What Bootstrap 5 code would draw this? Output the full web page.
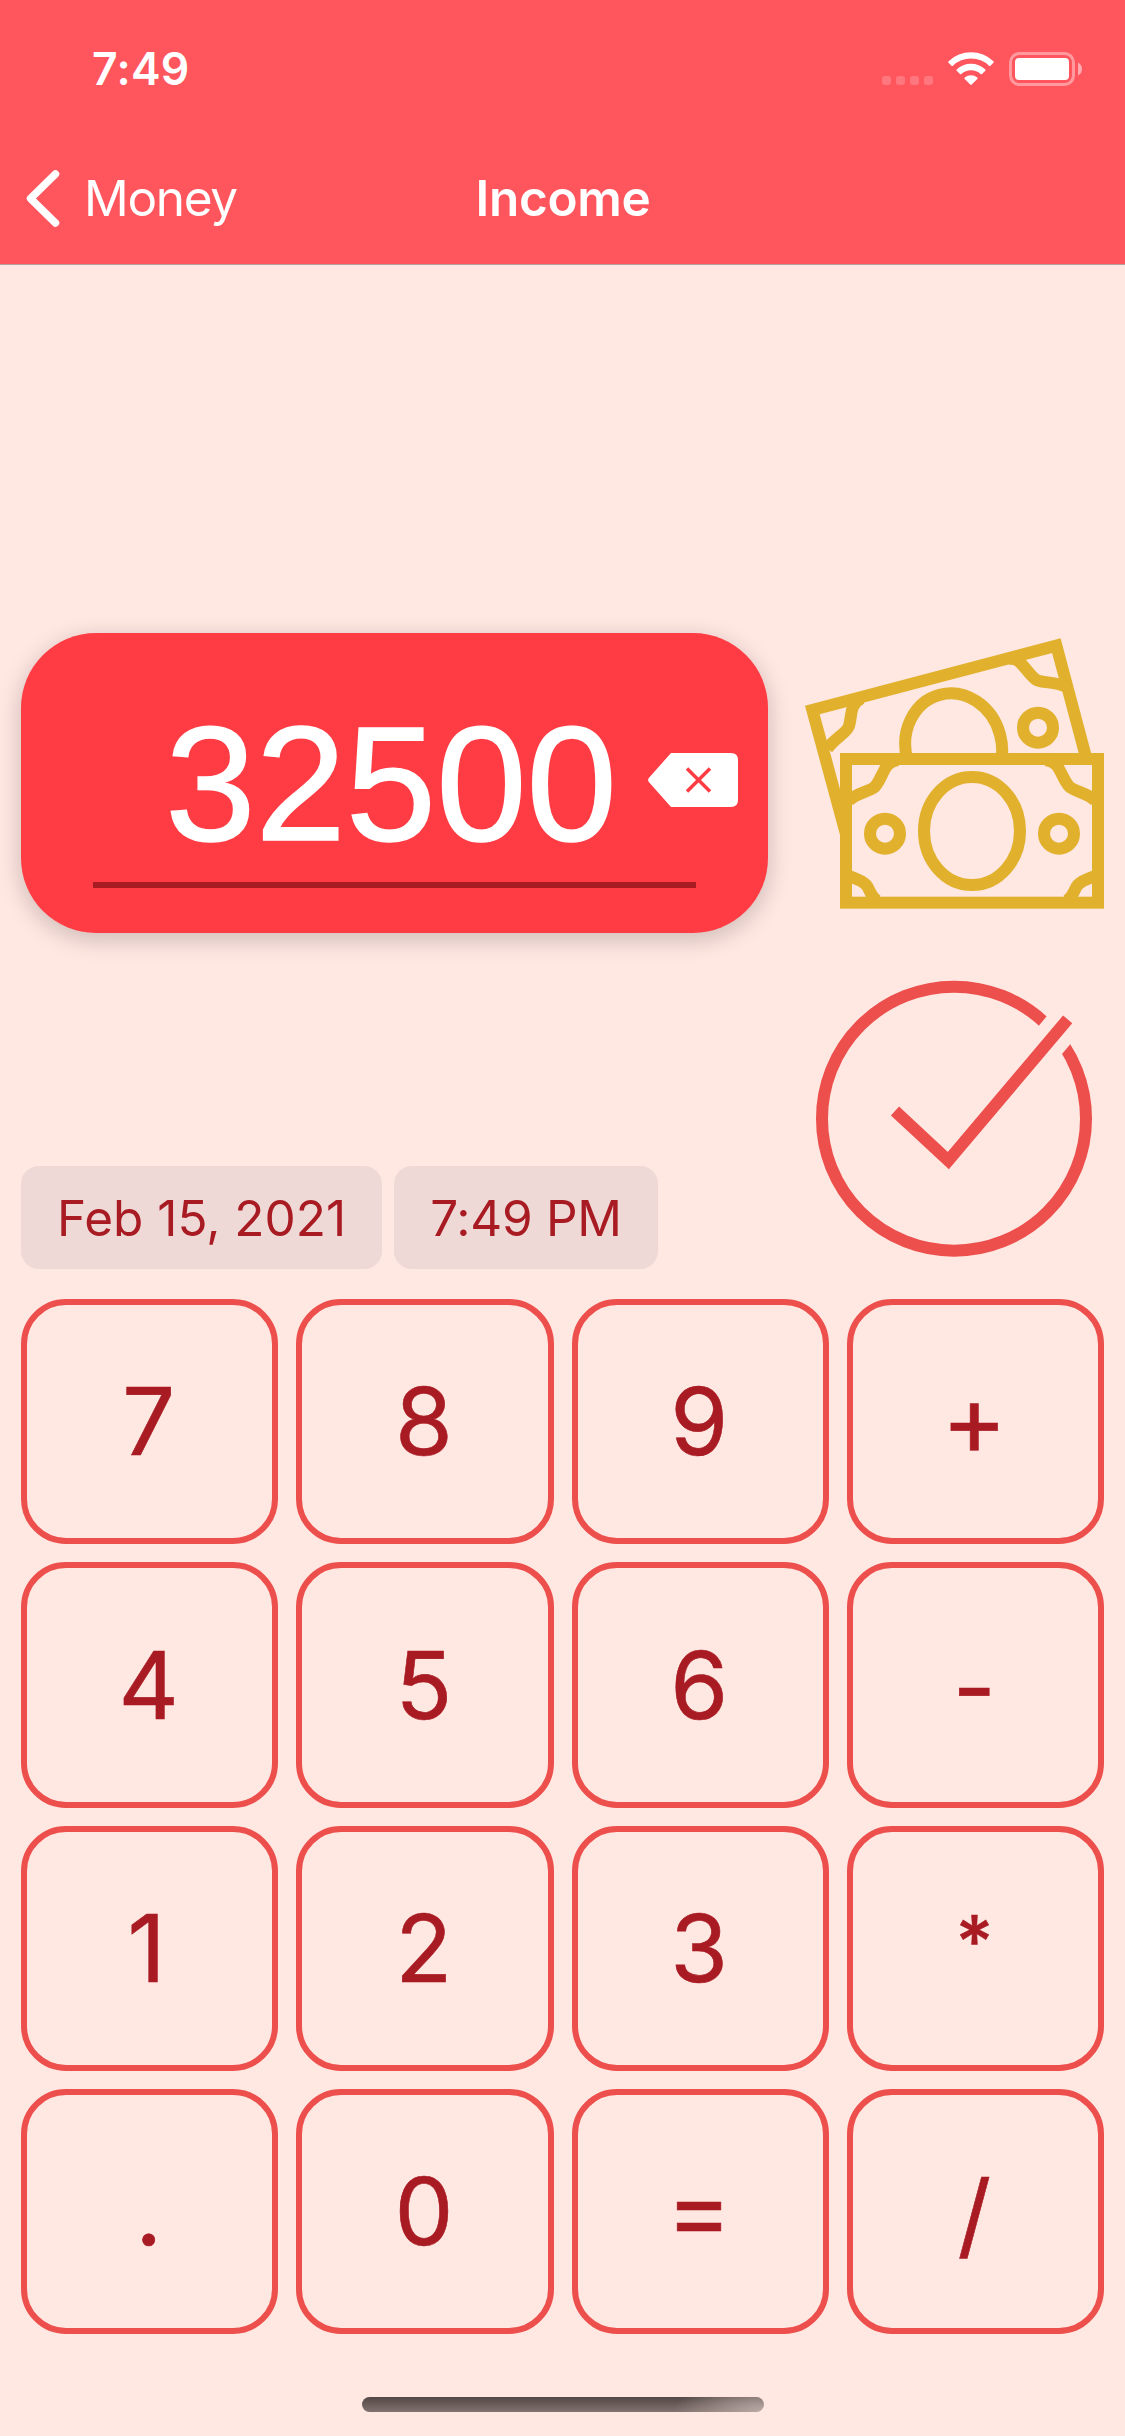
<!DOCTYPE html>
<html lang="en">
<head>
<meta charset="utf-8">
<meta name="viewport" content="width=device-width, initial-scale=1">
<title>Income</title>
<link href="https://cdn.jsdelivr.net/npm/bootstrap@5.3.0/dist/css/bootstrap.min.css" rel="stylesheet">
<style>
body{background:#ffe7e2;font-family:Inter,"Liberation Sans",sans-serif;color:#a91b23;min-height:2436px;overflow:hidden}
svg{display:block;flex-shrink:0}
.app-top{background:#ff565e;height:265px;border-bottom:1px solid #b3a29f;color:#fff}
.status-row{height:132px;padding:6px 42px 0 92px}
.clock{font-size:44.5px;font-weight:600;line-height:1;letter-spacing:.3px}
.nav-row{height:132px;padding:1px 25px 0;font-size:49.5px;line-height:1}
.nav-side{flex:1 1 0}
.nav-side a{color:#fff;letter-spacing:-1.3px}
.back-label{margin-left:22px}
.nav-title{letter-spacing:-.3px;padding-left:1px}
.page-pad{padding:0 21px}
.left-col{width:747px;padding-top:368px}
.amount-card{height:300px;border-radius:75px;background:#ff3c44;padding:70px 72px 0;box-shadow:0 6px 24px rgba(0,0,0,.2)}
.amount{font-family:"Liberation Sans",Arial,sans-serif;font-size:162.5px;line-height:162px;color:#fff;padding:0 79px 17px 0;border-bottom:6px solid #a91b23;-webkit-text-stroke:1.5px #fff}
.erase{right:30px;top:120px}
.pickers{margin-top:233px;gap:12px}
.picker{height:103px;border-radius:18px;background:#eed9d6;font-size:49.5px;line-height:1;padding-top:2px}
.picker-date{width:361px}
.picker-time{width:264px;letter-spacing:-.3px}
.right-col{padding-top:355px}
.keypad{display:grid;grid-template-columns:repeat(4,1fr);grid-auto-rows:1fr;gap:18px;height:1035px;margin-top:30px}
.key{border:6px solid #ec4f4c;border-radius:45px;font-size:93.5px;line-height:1;color:#a91b23;padding:1px 2px 0 0;-webkit-text-stroke:.6px #a91b23}
.key-one{padding-right:6px}
.key-minus{padding-top:5px}
.key-plus,.key-equals{font-size:99px;padding-bottom:5px}
.key-times{font-size:72px;font-weight:500;padding-bottom:16px}
.key-divide{padding-top:7px}
.home-bar{width:402px;height:15px;border-radius:8px;margin:63px auto 0;background:radial-gradient(90px 34px at 100% 100%,rgba(190,172,168,.95),rgba(160,145,141,0)),linear-gradient(#524845,#82726f)}
</style>
</head>
<body>
<header class="app-top">
  <div class="status-row d-flex align-items-center justify-content-between">
    <span class="clock">7:49</span>
    <svg width="202" height="34" viewBox="881 52 202 34" fill="#fff">
      <g fill-opacity=".2"><rect x="882" y="76" width="9" height="9" rx="3"/><rect x="896" y="76" width="9" height="9" rx="3"/><rect x="910" y="76" width="9" height="9" rx="3"/><rect x="924" y="76" width="9" height="9" rx="3"/></g>
      <path d="M948.6 61.2A32.5 32.5 0 0 1 993.4 61.2Q994.2 62 993.4 62.8L990.5 65.7Q989.7 66.4 989 65.7A26 26 0 0 0 953 65.7Q952.3 66.4 951.5 65.7L948.6 62.8Q947.8 62 948.6 61.2Z"/>
      <path d="M956.7 69.4A21 21 0 0 1 985.3 69.4Q986 70.1 985.3 70.8L982 74Q981.3 74.6 980.6 74A14.3 14.3 0 0 0 961.4 74Q960.7 74.6 960 74L956.7 70.8Q956 70.1 956.7 69.4Z"/>
      <path d="M964.7 77.6A9.8 9.8 0 0 1 977.3 77.6Q978 78.3 977.3 79L971.7 84.6Q971 85.2 970.3 84.6L964.7 79Q964 78.3 964.7 77.6Z"/>
      <rect x="1010.5" y="53.5" width="63" height="31" rx="9" fill="none" stroke="#fff" stroke-opacity=".4" stroke-width="3"/>
      <rect x="1015" y="58" width="54" height="22" rx="4"/>
      <path d="M1078 62.5Q1082 64.5 1082 69T1078 75.5Z" fill-opacity=".5"/>
    </svg>
  </div>
  <nav class="nav-row d-flex align-items-center">
    <div class="nav-side"><a href="#" class="d-flex align-items-center text-decoration-none">
      <svg width="37" height="60" viewBox="25.5 168.500 37 60" fill="none" stroke="#fff" stroke-width="7.500" stroke-linecap="round" stroke-linejoin="round"><path d="M56 173.500L31 198L56 222.500"/></svg>
      <span class="back-label">Money</span></a></div>
    <span class="nav-title fw-semibold">Income</span>
    <div class="nav-side"></div>
  </nav>
</header>

<main class="page-pad">
  <div class="d-flex justify-content-between">
    <section class="left-col">
      <div class="amount-card position-relative">
        <div class="amount text-end">32500</div>
        <svg class="erase position-absolute" width="91" height="54" viewBox="0 0 91 54"><path d="M24 0H84Q91 0 91 7V47Q91 54 84 54H24L1.800 29Q.4 27 1.800 25Z" fill="#fff"/><path d="M40 15.500L63 38.500M63 15.500L40 38.500" stroke="#ff3c44" stroke-width="3.500"/></svg>
      </div>
      <div class="pickers d-flex">
        <div class="picker picker-date d-flex align-items-center justify-content-center">Feb 15, 2021</div>
        <div class="picker picker-time d-flex align-items-center justify-content-center">7:49 PM</div>
      </div>
    </section>
    <section class="right-col d-flex flex-column">
      <svg width="314" height="310" viewBox="0 0 942 930" fill="none" stroke="#e1b12d" stroke-width="36">
        <defs><clipPath id="behind"><path d="M0 0H942V410H160V700H0Z"/></clipPath></defs>
        <g clip-path="url(#behind)">
          <path d="M170 650L67 270L799 77L889 415"/>
          <ellipse cx="491" cy="381" rx="144" ry="162" transform="rotate(-15 491 381)"/>
          <circle cx="744" cy="323" r="45"/>
          <path d="M215 234C178 252 186 290 177 318C168 342 138 350 112 386"/>
          <path d="M652 118C690 104 708 158 738 179C758 190 798 184 832 202"/>
        </g>
        <rect x="168" y="417" width="756" height="431"/>
        <ellipse cx="546" cy="633" rx="144" ry="162"/>
        <circle cx="285" cy="641" r="45"/><circle cx="807" cy="641" r="45"/>
        <path d="M325 420C280 424 282 468 255 500C238 515 200 518 176 542M766 420C812 424 810 468 838 500C854 515 892 518 916 542M172 766C196 776 212 778 228 794C240 808 242 830 262 842M920 766C896 776 880 778 864 794C852 808 850 830 830 842"/>
      </svg>
      <svg class="mt-auto" width="314" height="309" viewBox="0 0 942 927" fill="none" stroke="#ec4f4c" stroke-width="36">
        <defs><mask id="gap" maskUnits="userSpaceOnUse" x="0" y="0" width="942" height="927"><path d="M0 0H942V927H0Z" fill="#fff" stroke="none"/><path d="M640 408L900 98" stroke="#000" stroke-width="108"/></mask></defs>
        <circle cx="492" cy="476" r="396" mask="url(#gap)"/>
        <path d="M315 453L475 602L833 178"/>
      </svg>
    </section>
  </div>

  <div class="keypad">
    <button class="btn key">7</button><button class="btn key">8</button><button class="btn key">9</button><button class="btn key key-plus">+</button>
    <button class="btn key">4</button><button class="btn key">5</button><button class="btn key">6</button><button class="btn key key-minus">-</button>
    <button class="btn key key-one">1</button><button class="btn key">2</button><button class="btn key">3</button><button class="btn key key-times">*</button>
    <button class="btn key">.</button><button class="btn key">0</button><button class="btn key key-equals">=</button><button class="btn key key-divide">/</button>
  </div>
  <div class="home-bar"></div>
</main>
<script src="https://cdn.jsdelivr.net/npm/bootstrap@5.3.0/dist/js/bootstrap.bundle.min.js"></script>
</body>
</html>
